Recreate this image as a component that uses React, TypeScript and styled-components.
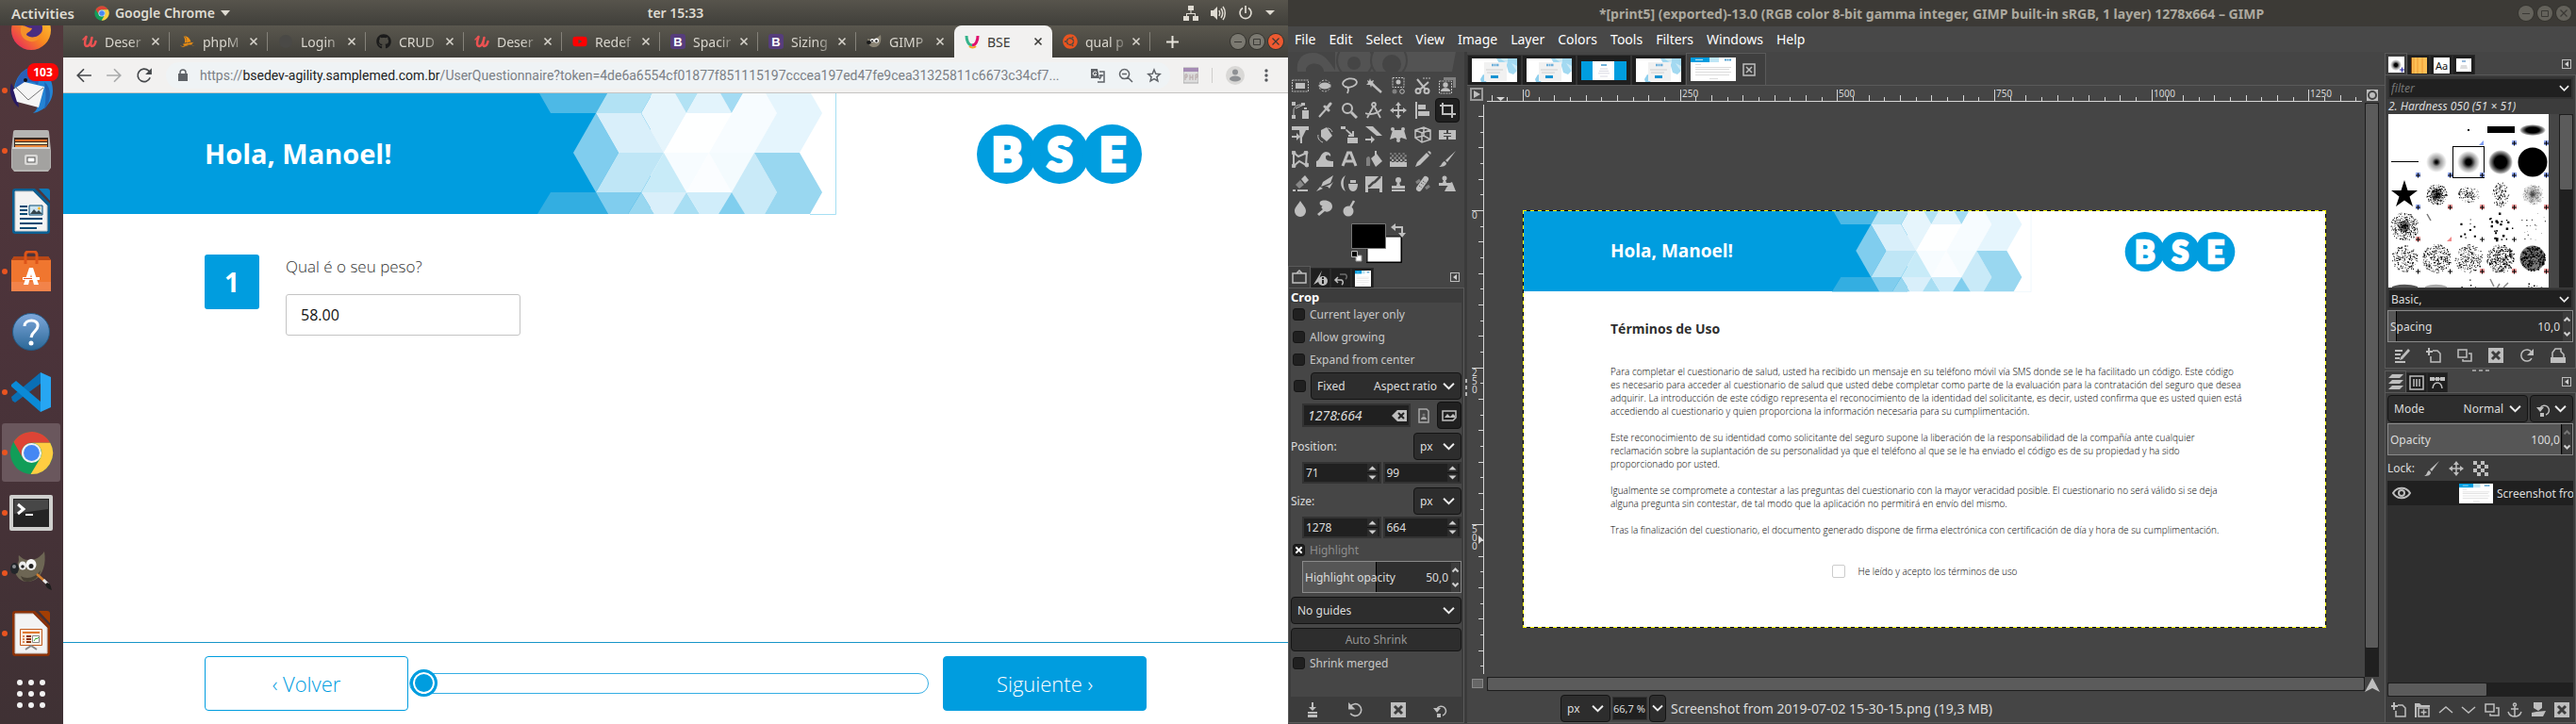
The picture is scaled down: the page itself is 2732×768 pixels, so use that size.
import React, { ReactNode } from 'react';
import styled, { createGlobalStyle, css } from 'styled-components';
import { FaGithub, FaYoutube, FaUbuntu } from 'react-icons/fa';
import { SiPhpmyadmin } from 'react-icons/si';

const UI = '"Noto Sans", "Open Sans", sans-serif';
const WEB = '"Open Sans", "Noto Sans", sans-serif';
const BLUE = '#009ddf';
const INK = '#bebebe';

const Global = createGlobalStyle`
  *, *::before, *::after { box-sizing: border-box; }
  html, body { margin: 0; background: #454545; }
  body { font-family: ${UI}; font-size: 12px; overflow: hidden; }
  button, input, select { font: inherit; color: inherit; margin: 0; padding: 0; border: 0; background: none; }
  svg { display: block; flex: none; }
  p, h1, h2 { margin: 0; }
`;

const Screen = styled.div`
  display: grid;
  grid-template-columns: minmax(0, 1fr) minmax(0, 1fr);
  height: 100vh;
`;

/* ------------------------------------------------------------ desktop */

const Desktop = styled.section`
  display: flex;
  flex-direction: column;
  min-width: 0;
  min-height: 0;
`;

const TopBar = styled.header`
  display: grid;
  grid-template-columns: 67px 1fr auto 1fr;
  align-items: center;
  height: 27px;
  flex: none;
  background: linear-gradient(#57544c, #403f3a);
  color: #dfdbd2;
  font-size: 14px;
  font-weight: 600;
`;

const TopLeft = styled.div`
  grid-column: 1 / 3;
  display: flex;
  align-items: center;
  gap: 6px;
  padding-left: 12px;
`;

const Activities = styled.button`
  margin-right: 15px;
  font-size: 15px;
  font-weight: 600;
`;

const TopRight = styled.div`
  display: flex;
  justify-content: flex-end;
  align-items: center;
  gap: 13px;
  padding-right: 14px;
`;

const DesktopBody = styled.div`
  display: flex;
  flex: 1;
  min-height: 0;
`;

const Launcher = styled.nav`
  display: flex;
  flex-direction: column;
  justify-content: flex-end;
  width: 67px;
  flex: none;
  overflow: hidden;
  background: linear-gradient(#52383c, #4b333a 45%, #3f3134);
`;

const LaunchItem = styled.button<{ $running?: boolean; $active?: boolean }>`
  position: relative;
  display: flex;
  align-items: center;
  justify-content: center;
  width: 62px;
  height: 62px;
  margin: 1px 3px 1px 2px;
  flex: none;
  border-radius: 3px;
  background: ${p => (p.$active ? '#6a575d' : 'transparent')};
  ${p =>
    p.$running &&
    css`
      &::before {
        content: '';
        position: absolute;
        left: 0;
        top: 28px;
        width: 6px;
        height: 6px;
        border-radius: 50%;
        background: #e95420;
      }
    `}
`;

const Badge = styled.span`
  position: absolute;
  left: 27px;
  top: 2px;
  width: 33px;
  height: 19px;
  border-radius: 8px;
  background: #fb0707;
  color: #fff;
  font-size: 12px;
  font-weight: 700;
  line-height: 19px;
  text-align: center;
`;

/* ------------------------------------------------------------ browser */

const Browser = styled.main`
  display: flex;
  flex-direction: column;
  flex: 1;
  min-width: 0;
  background: #fff;
`;

const TabStrip = styled.div`
  display: flex;
  align-items: stretch;
  height: 34px;
  flex: none;
  padding-left: 9px;
  background: linear-gradient(#5a574e, #403f3a);
  color: #d8d5cd;
`;

const Tab = styled.div<{ $active?: boolean; $line?: boolean }>`
  display: flex;
  align-items: center;
  flex: 0 1 104px;
  min-width: 0;
  padding: 0 10px 0 11px;
  background: ${p => (p.$active ? '#f2f1f0' : 'transparent')};
  color: ${p => (p.$active ? '#3c3b37' : 'inherit')};
  border-radius: 8px 8px 0 0;
  ${p =>
    p.$line &&
    css`
      background: linear-gradient(#85827a, #85827a) right 7px / 1px 20px no-repeat;
    `}
`;

const TabName = styled.a<{ $active?: boolean }>`
  flex: 1;
  min-width: 0;
  margin-left: 8px;
  overflow: hidden;
  white-space: nowrap;
  color: inherit;
  text-decoration: none;
  font-size: 14px;
  ${p => !p.$active && css`mask-image: linear-gradient(90deg, #000 60%, transparent 105%);`}
`;

const TabClose = styled.button`
  width: 10px;
  margin-left: 4px;
`;

const NewTab = styled.button`
  display: flex;
  align-items: center;
  padding: 0 17px;
`;

const WinButtons = styled.div`
  display: flex;
  align-items: center;
  gap: 4px;
  margin-left: auto;
  padding-right: 5px;
`;

const WinButton = styled.button<{ $close?: boolean; $dim?: boolean }>`
  display: flex;
  align-items: center;
  justify-content: center;
  width: 16px;
  height: 16px;
  border-radius: 50%;
  background: ${p => (p.$close ? '#ee5a31' : p.$dim ? '#64625b' : '#7b7971')};
  color: #3a3935;
  box-shadow: 0 0 0 1px #35342f;
`;

const NavBar = styled.div`
  display: flex;
  align-items: center;
  height: 38px;
  flex: none;
  padding: 0 14px 0 13px;
  gap: 14px;
  background: #f2f1f0;
  border-bottom: 1px solid #c5c4c2;
  color: #5a5d61;
`;

const IconButton = styled.button`
  display: flex;
  align-items: center;
  justify-content: center;
  min-width: 18px;
`;

const UrlBox = styled.div`
  display: flex;
  align-items: center;
  flex: 1;
  min-width: 0;
  height: 28px;
  padding: 0 8px 0 12px;
  gap: 12px;
  border-radius: 14px;
  background: #eff3f5;
`;

const Url = styled.div`
  flex: 1;
  min-width: 0;
  overflow: hidden;
  text-overflow: ellipsis;
  white-space: nowrap;
  font-family: Roboto, "Noto Sans", sans-serif;
  font-size: 14px;
  color: #7b8085;
  b { font-weight: 400; color: #222; }
`;

const Divider = styled.span`
  width: 1px;
  height: 16px;
  background: #cfcecc;
`;

/* --------------------------------------------- questionnaire web page */

const Hero = styled.div<{ $small?: boolean }>`
  display: flex;
  flex: none;
  height: ${p => (p.$small ? 85 : 129)}px;
`;

const Banner = styled.div`
  display: flex;
  flex: 1;
  min-width: 0;
`;

const Greeting = styled.h1<{ $small?: boolean }>`
  flex: 1;
  min-width: 0;
  background: ${BLUE};
  color: #fff;
  font-family: ${WEB};
  white-space: nowrap;
  font-size: ${p => (p.$small ? 19 : 29)}px;
  line-height: ${p => (p.$small ? 84 : 128)}px;
  height: ${p => (p.$small ? 85 : 128)}px;
  padding-left: ${p => (p.$small ? 92 : 150)}px;
`;

const LogoCell = styled.div<{ $small?: boolean }>`
  display: flex;
  align-items: center;
  justify-content: flex-end;
  flex: 0 0 ${p => (p.$small ? '36.6%' : '36.8%')};
  padding-right: ${p => (p.$small ? 95 : 155)}px;
`;

const Question = styled.section`
  display: flex;
  flex: 1;
  gap: 28px;
  padding: 42px 150px 0;
  font-family: ${WEB};
`;

const QuestionNumber = styled.div`
  width: 58px;
  height: 58px;
  border-radius: 3px;
  background: ${BLUE};
  color: #fff;
  font-size: 28px;
  font-weight: 700;
  line-height: 58px;
  text-align: center;
`;

const Field = styled.div`
  display: flex;
  flex-direction: column;
  width: 249px;
  label {
    height: 42px;
    line-height: 26px;
    font-size: 17px;
    font-weight: 300;
    color: #333;
  }
  input {
    height: 44px;
    padding: 0 15px;
    border: 1px solid #c4c4c4;
    border-radius: 3px;
    font-size: 16px;
    color: #111;
  }
`;

const Footer = styled.footer`
  display: flex;
  align-items: center;
  height: 87px;
  flex: none;
  padding: 0 150px;
  border-top: 1px solid #1795c8;
  font-family: ${WEB};
`;

const StepButton = styled.button<{ $primary?: boolean }>`
  width: 216px;
  height: 58px;
  flex: none;
  border: 1px solid ${BLUE};
  border-radius: 4px;
  background: ${p => (p.$primary ? BLUE : '#fff')};
  color: ${p => (p.$primary ? '#fff' : BLUE)};
  font-size: 22px;
  font-weight: 300;
`;

const Progress = styled.input`
  appearance: none;
  flex: 1;
  min-width: 0;
  height: 30px;
  margin: 0 15px 0 1px;
  &::-webkit-slider-runnable-track {
    height: 22px;
    border: 1px solid #35aee4;
    border-radius: 11px;
  }
  &::-webkit-slider-thumb {
    appearance: none;
    width: 29px;
    height: 29px;
    margin-top: -5px;
    border: 3px solid ${BLUE};
    border-radius: 50%;
    background: ${BLUE};
    box-shadow: inset 0 0 0 2px #fff;
  }
`;

/* --------------------------------------------------------------- gimp */

const Gimp = styled.section`
  display: flex;
  flex-direction: column;
  min-width: 0;
  min-height: 0;
  background: #454545;
  color: #dcdcdc;
`;

const TitleBar = styled.header`
  display: flex;
  align-items: center;
  height: 28px;
  flex: none;
  background: #3c3a36;
  color: #aca99f;
  font-size: 14px;
  font-weight: 700;
  span { flex: 1; padding-left: 60px; text-align: center; white-space: nowrap; }
`;

const MenuBar = styled.nav`
  display: flex;
  align-items: center;
  gap: 14px;
  height: 27px;
  flex: none;
  padding-left: 7px;
  background: #484848;
  color: #fff;
  font-size: 14px;
`;

const GimpBody = styled.div`
  display: flex;
  flex: 1;
  min-height: 0;
  padding-bottom: 1px;
`;

const Dock = styled.aside<{ $w: number }>`
  display: flex;
  flex-direction: column;
  width: ${p => p.$w}px;
  flex: none;
  min-height: 0;
`;

const Sash = styled.div`
  width: 3px;
  flex: none;
  background: linear-gradient(#b5b5b5 0 4px, transparent 4px 7px, #b5b5b5 7px 11px, transparent 11px 14px, #b5b5b5 14px 18px) 1px 50% / 2px 18px no-repeat #3b3b3b;
`;

const ToolGrid = styled.div`
  display: grid;
  grid-template-columns: repeat(7, 26px);
  grid-auto-rows: 26px;
  margin-top: 2px;
`;

const Tool = styled.button<{ $on?: boolean }>`
  display: flex;
  align-items: center;
  justify-content: center;
  border-radius: 4px;
  ${p => p.$on && css`background: #202020; border: 1px solid #111;`}
`;

const DockTabs = styled.div<{ $h: number }>`
  display: flex;
  align-items: flex-end;
  height: ${p => p.$h}px;
  flex: none;
  padding-right: 5px;
`;

const DockTab = styled.button<{ $on?: boolean; $w: number }>`
  display: flex;
  align-items: center;
  justify-content: center;
  width: ${p => p.$w}px;
  height: ${p => (p.$on ? 23 : 21)}px;
  background: ${p => (p.$on ? '#3c3c3c' : '#1f1f1f')};
  border: 1px solid ${p => (p.$on ? '#5a5a5a' : '#2a2a2a')};
  border-bottom: 0;
`;

const TabMenu = styled.button`
  display: flex;
  align-items: center;
  justify-content: center;
  width: 10px;
  height: 10px;
  margin: 0 0 6px auto;
  border: 1px solid #bdbdbd;
`;

const Frame = styled.div<{ $grow?: boolean }>`
  display: flex;
  flex-direction: column;
  min-height: 0;
  flex: ${p => (p.$grow ? 1 : 'none')};
  padding: 0 2px;
  background: #3c3c3c;
  border: 1px solid #5a5a5a;
`;

const Options = styled.div`
  display: flex;
  flex-direction: column;
  flex: 1;
  min-height: 0;
  background: #464646;
`;

const OptionsTitle = styled.h2`
  height: 15px;
  flex: none;
  background: #3c3c3c;
  color: #fff;
  font-size: 13px;
  line-height: 18px;
`;

const Row = styled.div<{ $h?: number; $mt?: number; $pl?: number; $gap?: number }>`
  display: flex;
  align-items: center;
  flex: none;
  height: ${p => p.$h ?? 24}px;
  margin-top: ${p => p.$mt ?? 0}px;
  padding-left: ${p => p.$pl ?? 0}px;
  gap: ${p => p.$gap ?? 0}px;
`;

const Grow = styled.span`
  flex: 1;
`;

const CheckLabel = styled.label<{ $dim?: boolean }>`
  display: flex;
  align-items: center;
  gap: 5px;
  height: 24px;
  flex: none;
  padding-left: 2px;
  color: ${p => (p.$dim ? '#8d8d8d' : '#c8c8c8')};
`;

const Check = styled.input`
  appearance: none;
  width: 13px;
  height: 13px;
  flex: none;
  border: 1px solid #151515;
  border-radius: 3px;
  background: #202020;
  &:checked {
    background:
      linear-gradient(45deg, transparent 40%, #fff 40% 60%, transparent 60%) center / 7px 7px no-repeat,
      linear-gradient(-45deg, transparent 40%, #fff 40% 60%, transparent 60%) center / 7px 7px no-repeat,
      #202020;
  }
`;

const Combo = styled.label<{ $w?: number; $tight?: boolean }>`
  display: flex;
  align-items: center;
  height: 29px;
  padding: 0 ${p => (p.$tight ? 2 : 6)}px;
  ${p => (p.$w ? css`width: ${p.$w}px; flex: none;` : css`flex: 1; min-width: 0;`)}
  border: 1px solid #141414;
  border-radius: 4px;
  background: #2d2d2d;
  select {
    appearance: none;
    flex: 1;
    min-width: 0;
    outline: 0;
  }
`;

const RightSelect = styled.select`
  text-align-last: right;
  padding-right: 6px;
`;

const Entry = styled.label<{ $w?: number; $h: number; $italic?: boolean; $tight?: boolean }>`
  display: flex;
  align-items: center;
  height: ${p => p.$h}px;
  ${p => (p.$w ? css`width: ${p.$w}px; flex: none;` : css`flex: 1; min-width: 0;`)}
  padding: 0 ${p => (p.$tight ? 0 : 2)}px;
  border: ${p => (p.$tight ? 1 : 2)}px solid #333;
  background: #202020;
  input {
    flex: 1;
    min-width: 0;
    width: 100%;
    outline: 0;
    ${p => p.$italic && css`font-size: 14px; font-style: italic; padding-left: 2px;`}
    ${p => p.$tight && css`font-size: 11px;`}
  }
  input::placeholder { color: #757575; font-style: italic; }
`;

const ScaleBox = styled.label<{ $fill: string }>`
  display: flex;
  align-items: center;
  width: 100%;
  height: 34px;
  flex: none;
  padding: 0 1px 0 2px;
  border: 1px solid #8a8a8a;
  background: linear-gradient(90deg, #565656 ${p => p.$fill}, #000 ${p => p.$fill}, #000 calc(${p => p.$fill} + 1px), #2f2f2f calc(${p => p.$fill} + 1px));
  span { white-space: nowrap; }
  input { flex: 1; min-width: 0; width: 20px; padding-right: 3px; text-align: right; outline: 0; }
`;

const PushButton = styled.button`
  height: 25px;
  flex: none;
  margin-top: 4px;
  border: 1px solid #141414;
  border-radius: 4px;
  background: #2d2d2d;
  color: #969696;
`;

const Pressed = styled.button<{ $on?: boolean }>`
  display: flex;
  align-items: center;
  justify-content: center;
  width: 26px;
  height: 29px;
  ${p => p.$on && css`background: #202020; border: 1px solid #111; border-radius: 4px;`}
`;

const ActionBar = styled.div`
  display: flex;
  align-items: center;
  justify-content: space-around;
  height: 27px;
  flex: none;
`;

const Workspace = styled.main`
  display: flex;
  flex-direction: column;
  flex: 1;
  min-width: 0;
`;

const ImageTabs = styled.div`
  display: flex;
  align-items: flex-end;
  height: 36px;
  flex: none;
  border-bottom: 1px solid #5a5a5a;
`;

const ImageTab = styled.button<{ $on?: boolean }>`
  display: flex;
  align-items: center;
  gap: 7px;
  flex: none;
  width: ${p => (p.$on ? 85 : 58)}px;
  height: ${p => (p.$on ? 34 : 32)}px;
  padding: 0 4px;
  background: ${p => (p.$on ? '#3f3f3f' : '#1f1f1f')};
  border: 1px solid ${p => (p.$on ? '#5a5a5a' : '#333')};
  border-bottom: 0;
`;

const RulerRow = styled.div`
  display: flex;
  height: 18px;
  flex: none;
  overflow: hidden;
`;

const RulerClip = styled.div`
  flex: 1;
  min-width: 0;
  overflow: hidden;
`;

const CanvasRow = styled.div`
  display: flex;
  flex: 1;
  min-height: 0;
  gap: 1px;
  padding-right: 6px;
`;

const SideRuler = styled.div`
  width: 18px;
  flex: none;
  overflow: hidden;
`;

const Viewport = styled.div`
  display: flex;
  justify-content: center;
  align-items: flex-start;
  flex: 1;
  min-width: 0;
  overflow: hidden;
  padding-top: 114px;
`;

const Marquee = styled.div`
  width: 852px;
  flex: none;
  padding: 1px;
  background:
    repeating-linear-gradient(90deg, #ff0 0 4px, #000 4px 8px) top / 100% 1px no-repeat,
    repeating-linear-gradient(90deg, #ff0 0 4px, #000 4px 8px) bottom / 100% 1px no-repeat,
    repeating-linear-gradient(#ff0 0 4px, #000 4px 8px) left / 1px 100% no-repeat,
    repeating-linear-gradient(#ff0 0 4px, #000 4px 8px) right / 1px 100% no-repeat;
`;

const Sheet = styled.article`
  display: flex;
  flex-direction: column;
  height: 441px;
  background: #fff;
  color: #000;
  font-family: ${WEB};
`;

const Terms = styled.div`
  display: flex;
  flex-direction: column;
  padding: 30px 92px 0;
  font-size: 10px;
  font-weight: 300;
  line-height: 14px;
  h2 { margin-bottom: 28px; color: #2f2f2f; font-size: 14px; line-height: 20px; }
  p { margin-bottom: 14px; white-space: nowrap; }
`;

const Accept = styled.label`
  display: flex;
  align-items: center;
  align-self: center;
  gap: 14px;
  margin-top: 16px;
  input {
    appearance: none;
    width: 14px;
    height: 14px;
    border: 1px solid #ccc;
    border-radius: 2px;
  }
`;

const VTrack = styled.div<{ $thumb: string }>`
  width: 15px;
  flex: none;
  background: #202020;
  &::before {
    content: '';
    display: block;
    height: ${p => p.$thumb};
    border: 1px solid #1d1d1d;
    border-radius: 2px;
    background: #5b5b5b;
  }
`;

const HTrack = styled.div<{ $thumb: string; $grow?: boolean }>`
  height: 15px;
  flex: ${p => (p.$grow ? 1 : 'none')};
  background: #202020;
  &::before {
    content: '';
    display: block;
    width: ${p => p.$thumb};
    height: 15px;
    border: 1px solid #1d1d1d;
    border-radius: 2px;
    background: #5b5b5b;
  }
`;

const ScrollRow = styled.div`
  display: flex;
  align-items: flex-start;
  height: 18px;
  flex: none;
  padding: 0 1px 0 5px;
  svg:first-child { margin-right: 4px; }
`;

const StatusBar = styled.footer`
  display: flex;
  align-items: center;
  height: 31px;
  flex: none;
  padding-left: 99px;
  gap: 2px;
  border-bottom: 1px solid #5a5a5a;
  span { padding-left: 3px; font-size: 14px; }
`;

const BrushCaption = styled.p`
  height: 16px;
  flex: none;
  padding-left: 1px;
  font-style: italic;
  line-height: 15px;
`;

const BrushArea = styled.div`
  display: flex;
  justify-content: space-between;
  height: 184px;
  flex: none;
  background: #464646;
`;

const BrushGrid = styled.div`
  display: grid;
  grid-template-columns: repeat(5, 34px);
  grid-auto-rows: 34px;
  overflow: hidden;
  margin-left: 1px;
  background: #fff;
`;

const BrushCell = styled.button<{ $on?: boolean }>`
  width: 34px;
  height: 34px;
  box-shadow: ${p => (p.$on ? 'inset 0 0 0 1px #000' : 'none')};
`;

const Grip = styled.div`
  height: 5px;
  flex: none;
  margin: 0 auto;
  width: 18px;
  background: repeating-linear-gradient(90deg, #9a9a9a 0 4px, transparent 4px 7px) 0 1px / 18px 2px no-repeat;
`;

const LayerList = styled.div`
  flex: 1;
  min-height: 0;
  background: #2f2f2f;
`;

const LayerRow = styled.div`
  display: flex;
  align-items: center;
  height: 26px;
  padding-left: 5px;
  overflow: hidden;
  background: #202020;
  white-space: nowrap;
  span { padding-left: 4px; }
`;

const LayerThumb = styled.div`
  margin-left: 51px;
`;

/* -------------------------------------------------------------- icons */

const Chevron = ({ size = 13 }: { size?: number }) => (
  <svg width={size} height={size} viewBox="0 0 12 12" fill="none" stroke="#ededed" strokeWidth="1.8">
    <path d="M1 3.5l5 5 5-5" />
  </svg>
);

const Cross = ({ w = 1.6 }: { w?: number }) => (
  <svg width="10" height="10" viewBox="0 0 10 10" stroke="currentColor" strokeWidth={w}>
    <path d="M1.500 1.500l7 7M8.500 1.500l-7 7" />
  </svg>
);

const SpinArrows = () => (
  <svg width="11" height="19" viewBox="0 0 11 19">
    <path d="M0 0h11v19H0z" fill="#2b2b2b" />
    <path d="M0 9h11v1H0z" fill="#111" />
    <path d="M1.500 6.500l4-4 4 4zM1.500 12.500l4 4 4-4z" fill="#cfcfcf" />
  </svg>
);

const ScaleArrows = ({ top = '#cfcfcf' }: { top?: string }) => (
  <svg width="9" height="31" viewBox="0 0 9 31" fill="none" strokeWidth="2">
    <path d="M0 0h9v31H0z" fill="#3c3c3c" />
    <path d="M1.500 9.500l3-3 3 3" stroke={top} />
    <path d="M1.500 21.500l3 3 3-3" stroke="#cfcfcf" />
  </svg>
);

const LeftTriangle = () => (
  <svg width="6" height="6" viewBox="0 0 6 6"><path d="M5 0v6L1 3z" fill="#d0d0d0" /></svg>
);

const ChromeLogo = ({ size }: { size: number }) => (
  <svg width={size} height={size} viewBox="0 0 48 48">
    <circle cx="24" cy="24" r="23" fill="#119d58" />
    <path d="M24 13h20.200A23 23 0 0 0 4.500 12L14.500 29.500A11 11 0 0 1 24 13z" fill="#dd4436" />
    <path d="M44.200 13H24a11 11 0 0 1 9.500 16.500L23 47A23 23 0 0 0 44.200 13z" fill="#ffcd41" />
    <circle cx="24" cy="24" r="10.800" fill="#f1f1f1" />
    <circle cx="24" cy="24" r="8.600" fill="#4587f3" />
  </svg>
);

const Wilber = ({ size }: { size: number }) => (
  <svg width={size} height={size} viewBox="0 0 46 46">
    <path d="M9 12c2-3 0-6 1-8 3 3 6 5 10 5 7 0 12-2 17-9 1 6 1 12-1 18-3 9-9 14-17 14-7 0-12-5-13-11z" fill="#6d6654" />
    <path d="M12 26c6 4 16 2 21-6-1 7-8 12-14 12-4 0-6-3-7-6z" fill="#453f33" />
    <ellipse cx="14" cy="15" rx="4" ry="4.500" fill="#eee" /><ellipse cx="23" cy="14" rx="5.500" ry="6" fill="#f6f6f6" />
    <circle cx="14" cy="16" r="1.800" fill="#222" /><circle cx="23" cy="15.500" r="2.500" fill="#222" />
    <ellipse cx="5.500" cy="18" rx="4.500" ry="6" fill="#23262a" /><ellipse cx="5" cy="16" rx="2" ry="2" fill="#8b8f93" />
    <path d="M29 24l9 8" stroke="#d6802e" strokeWidth="2.500" /><path d="M36 30l5 5" stroke="#e8e8e8" strokeWidth="3" />
    <path d="M40 33c4 1 4 5 5 8-4-1-6-3-7-6z" fill="#1d1d1d" />
  </svg>
);

const WilberFace = () => (
  <svg width="16" height="16" viewBox="0 0 16 16">
    <path d="M1 5l3 1c2 0 4-1 6-1l5-4c1 5 0 13-7 13-3 0-6-2-6-5z" fill="#8a8474" />
    <circle cx="6" cy="7" r="2" fill="#fff" /><circle cx="10.500" cy="7" r="2.500" fill="#fff" />
    <circle cx="6" cy="7.500" r="1" fill="#111" /><circle cx="10.500" cy="7.500" r="1.200" fill="#111" />
    <ellipse cx="2.500" cy="9" rx="2.500" ry="2" fill="#191919" />
  </svg>
);

const OfficeDoc = ({ main, corner, kind }: { main: string; corner: string; kind: 'writer' | 'impress' }) => (
  <svg width="40" height="48" viewBox="0 0 40 48">
    <path d="M3 0h21l16 16v29a3 3 0 0 1-3 3H3a3 3 0 0 1-3-3V3a3 3 0 0 1 3-3z" fill={main} />
    <path d="M3 3h19l15 15v27H3z" fill="#f3f3f3" /><path d="M3 3h19l15 15v27H3z" fill="none" stroke="#c7c7c7" />
    <path d="M28 0h9a3 3 0 0 1 3 3v10z" fill={corner} />
    {kind === 'writer' ? (
      <g>
        <path d="M8 18h8v2H8zm0 4h8v2H8zm0 4h8v2H8zm0 5h24v2H8zm0 5h24v2H8zm0 5h18v2H8z" fill="#074a73" />
        <path d="M18 18h14v10H18z" fill="#cfe6f2" stroke="#074a73" /><path d="M19 27l4-5 3 3 2-2 4 4z" fill="#35464e" />
        <circle cx="28.500" cy="21" r="1.500" fill="#f5b82e" />
      </g>
    ) : (
      <g>
        <path d="M8.500 19.500h23v17h-23z" fill="#fbeee0" stroke="#c25a1c" />
        <path d="M11 22h18v2H11z" fill="#e07a2f" />
        <path d="M15 26h5v2h-5zm0 3h5v2h-5zm0 3h5v2h-5z" fill="#8b3208" /><path d="M11 26h2v2h-2zm0 3h2v2h-2zm0 3h2v2h-2z" fill="#dd8a55" />
        <path d="M21.500 26.500h7v7h-7z" fill="#fff" stroke="#888" /><path d="M23 32l2-3 1 1 2-2" stroke="#3faf2f" fill="none" />
        <path d="M14 41l6-4 6 4" stroke="#888" strokeWidth="2" fill="none" />
      </g>
    )}
  </svg>
);

const Firefox = () => (
  <svg width="44" height="44" viewBox="0 0 44 44">
    <defs>
      <linearGradient id="ff" x1="1" y1="0" x2="0" y2="1">
        <stop offset="0" stopColor="#ffd23c" /><stop offset=".5" stopColor="#f98a1e" /><stop offset="1" stopColor="#e3136b" />
      </linearGradient>
    </defs>
    <circle cx="22" cy="22" r="21" fill="url(#ff)" />
    <circle cx="23" cy="20" r="11" fill="#4a2c80" />
    <path d="M12 17c5 0 6 3 11 3-1 4-6 4-6 7 4 4 13 3 16-3-1 9-9 12-15 9-6-2-9-10-6-16z" fill="#f5902a" />
  </svg>
);

const Thunderbird = () => (
  <svg width="48" height="50" viewBox="0 0 48 50">
    <path d="M22 1c14-2 25 9 25 24 0 12-9 22-21 24 4-3 5-6 5-9L6 22C8 12 13 4 22 1z" fill="#2383d4" />
    <path d="M22 1c8 2 12 10 9 18-6-6-14-4-24 6C7 14 13 4 22 1z" fill="#2a5fb8" />
    <path d="M3 17c-3 8 0 20 8 26l-2-14z" fill="#281a63" />
    <path d="M5 24l12-8 21 5-6 22L9 37z" fill="#f5f5f5" /><path d="M7 21l14 14 16-13" fill="none" stroke="#777" />
    <path d="M38 16c8 6 8 20 0 29 2-10 2-20 0-29z" fill="#1f63b4" /><circle cx="18" cy="14" r="2" fill="#111" />
  </svg>
);

const Files = () => (
  <svg width="42" height="44" viewBox="0 0 42 44">
    <path d="M2 2a2 2 0 0 1 2-2h34a2 2 0 0 1 2 2l2 20v18l-3 4H3l-3-4V22z" fill="#b5b4b2" />
    <path d="M3 8h36v12H3z" fill="#3a2a20" /><path d="M4 10h34v2H4z" fill="#e06b25" /><path d="M4 13h34v2H4z" fill="#fbe3b8" /><path d="M4 16h34v3H4z" fill="#ef8a3a" />
    <path d="M1 18h40v24H1z" fill="#a3a2a0" /><path d="M1 18h40v2H1z" fill="#d4d3d1" />
    <rect x="14" y="26" width="14" height="11" rx="2" fill="#d9d8d6" /><rect x="17" y="29" width="8" height="5" fill="#fff" stroke="#555" />
  </svg>
);

const Software = () => (
  <svg width="42" height="44" viewBox="0 0 42 44">
    <path d="M3 6h36l3 4v33H0V10z" fill="#f0762f" /><path d="M3 6h36l3 4H0z" fill="#b84716" />
    <path d="M15 14V4a3 3 0 0 1 3-3h6a3 3 0 0 1 3 3v10" stroke="#dd5419" strokeWidth="3" fill="none" />
    <path d="M0 33h42v10H0z" fill="#f2834a" />
    <path d="M13 36l6-18h4l6 18h-5l-3-11-3 11z" fill="#fff" /><path d="M12 28h18v3H12z" fill="#fff" /><path d="M13 29h9v1h-9z" fill="#e95420" />
  </svg>
);

const Help = () => (
  <svg width="40" height="40" viewBox="0 0 40 40">
    <defs><linearGradient id="hp" x2="0" y2="1"><stop stopColor="#7fa8dc" /><stop offset="1" stopColor="#2a6796" /></linearGradient></defs>
    <circle cx="20" cy="20" r="19.500" fill="url(#hp)" stroke="#235a86" />
    <path d="M13 14c0-8 15-8 14 0 0 5-6 5-7 12" stroke="#fff" strokeWidth="3" fill="none" /><circle cx="20" cy="32" r="2.500" fill="#fff" />
  </svg>
);

const VsCode = () => (
  <svg width="42" height="42" viewBox="0 0 42 42">
    <path d="M31 0L0 26l1 4 3 2 27-20z" fill="#0a6fb5" /><path d="M0 13l5-4 26 22v11L0 15z" fill="#0b8ad6" />
    <path d="M31 0l11 5v32l-11 5z" fill="#27a6f2" />
  </svg>
);

const Terminal = () => (
  <svg width="46" height="38" viewBox="0 0 46 38">
    <rect width="46" height="38" rx="2" fill="#cfcfcd" /><rect x="4" y="4" width="38" height="30" fill="#242424" />
    <path d="M5 5h36v10L5 20z" fill="#474747" /><path d="M9 10l6 5-6 5" stroke="#fff" strokeWidth="3" fill="none" /><path d="M17 21h8" stroke="#fff" strokeWidth="2" />
  </svg>
);

const AppsGrid = () => (
  <svg width="30" height="30" viewBox="0 0 30 30" fill="#f2f2f2">
    {[3, 15, 27].map(y => [3, 15, 27].map(x => <circle key={`${x}-${y}`} cx={x} cy={y} r="3" />))}
  </svg>
);

const Udemy = () => (
  <svg width="16" height="16" viewBox="0 0 16 16" fill="none" stroke="#ec5252" strokeLinecap="round" strokeLinejoin="round">
    <path d="M4.500 3C3 7 2 13 5 13c2.500 0 4.500-4 5.500-9-1 4-2 9 0 9 2 0 3.500-3 4-5" strokeWidth="2.500" />
    <path d="M1 6l3-3" strokeWidth="1.500" />
  </svg>
);

const Bootstrap = () => (
  <svg width="16" height="16" viewBox="0 0 16 16">
    <rect width="16" height="16" rx="3" fill="#563d7c" />
    <text x="8" y="13" fontSize="13" fontWeight="700" fill="#fff" textAnchor="middle" fontFamily="Liberation Sans, sans-serif">B</text>
  </svg>
);

const BseIcon = () => (
  <svg width="16" height="16" viewBox="0 0 16 16" fill="none" strokeWidth="3">
    <path d="M2 2c0 5 2 10 6 10" stroke="#35b38a" /><path d="M14 2c0 5-2 10-6 10" stroke="#e0116e" /><path d="M5 13c2 2 5 2 7 0" stroke="#f5a623" strokeWidth="2" />
  </svg>
);

/* Artwork of the page header: triangles on a lattice of side 48. */
const FACETS: [string, string][] = [
  ['2,0 74,0 62,21 14,21', '#4db9e6'],
  ['74,0 122,0 110,21 62,21', '#b2e2f4'],
  ['122,0 146,0 158,21 134,63 110,21', '#e6f5fc'],
  ['146,0 170,0 158,21', '#b2e2f4'],
  ['170,0 194,0 206,21 158,21', '#e3f4fc'],
  ['194,0 218,0 206,21', '#a3dbf3'],
  ['218,0 242,0 254,21 230,63 182,63 206,21', '#f7fcff'],
  ['242,0 290,0 302,21 278,63 230,63 254,21', '#e5f5fd'],
  ['62,21 86,63 62,105 38,63', '#80cdee'],
  ['62,21 110,21 134,63 86,63', '#d9effa'],
  ['86,63 134,63 110,105 62,105', '#bfe6f6'],
  ['158,21 206,21 182,63 134,63', '#feffff'],
  ['134,63 182,63 158,105', '#f7fcff'],
  ['182,63 206,105 158,105', '#fbfdff'],
  ['182,63 230,63 206,105', '#f4fbfe'],
  ['134,63 158,105 110,105', '#c8ebf8'],
  ['230,63 254,105 241,128 219,128 206,105', '#c9eaf8'],
  ['230,63 278,63 302,105 289,128 241,128 254,105', '#99d7f0'],
  ['14,105 62,105 75,128 0,128', '#33aee1'],
  ['62,105 110,105 96,128 75,128', '#80cdee'],
  ['110,105 124,128 96,128', '#99d7f0'],
  ['110,105 158,105 144,128 124,128', '#d9effa'],
  ['158,105 172,128 144,128', '#a8def3'],
  ['158,105 206,105 192,128 172,128', '#d0edfa'],
  ['206,105 220,128 192,128', '#80ceee'],
];

const Facets = ({ small }: { small?: boolean }) => (
  <svg width={small ? 212 : 318} height={small ? 86 : 129} viewBox="0 0 318 129">
    <path d="M0 0h120v128H0z" fill={BLUE} />
    {FACETS.map(([points, fill], i) => <polygon key={i} points={points} fill={fill} />)}
    <path d="M316.500 0v128.500H289" fill="none" stroke={small ? '#e8f5fc' : '#a6dff3'} />
  </svg>
);

const BseLogo = ({ small }: { small?: boolean }) => (
  <svg width={small ? 118 : 175} height={small ? 42 : 63} viewBox="0 0 175 63">
    <g fill={BLUE}>
      <circle cx="31.500" cy="31.500" r="31.500" /><circle cx="87.500" cy="31.500" r="31.500" /><circle cx="143.500" cy="31.500" r="31.500" />
    </g>
    <g fill="#fff" stroke="#fff" strokeWidth="4" fontFamily="Lato, sans-serif" fontWeight="900" fontSize="48" textAnchor="middle">
      <text x="32" y="49">B</text><text x="88" y="49">S</text><text x="144" y="49">E</text>
    </g>
  </svg>
);

/* Toolbox drawings on an 18 pixel square. */
const TOOLS: ReactNode[] = [
  <g><path d="M.5 3h17v12H.5z" fill="none" strokeDasharray="2 1" /><path d="M4 6h10v6H4z" stroke="none" /></g>,
  <g><ellipse cx="9" cy="9" rx="6" ry="6" fill="none" strokeDasharray="2 1.500" /><ellipse cx="9" cy="9" rx="6" ry="3.500" stroke="none" /></g>,
  <g fill="none" strokeWidth="1.800"><ellipse cx="9.500" cy="6" rx="7.500" ry="4.500" transform="rotate(-10 9 6)" /><path d="M4 10c4 0 5 2 3 7" /></g>,
  <g><path d="M7 7l10 9" strokeWidth="2.500" /><path d="M5 1l1 3 3-1-1 3 2 2-3 0-1 3-1-3-4 0 2-2-1-3 2 1z" stroke="none" /></g>,
  <g><path d="M3 .5h12v10H3z" fill="none" strokeDasharray="2 1" /><circle cx="9" cy="5" r="2.500" stroke="none" /><circle cx="5" cy="15" r="2.500" stroke="none" opacity=".5" /><circle cx="13" cy="15" r="2.300" fill="none" /></g>,
  <g fill="none" strokeWidth="2"><path d="M3 2l9 11M15 5l-9 8" /><circle cx="4" cy="14.500" r="2.500" /><circle cx="13" cy="14.500" r="2.500" /><path d="M9 1h9" strokeWidth="1" strokeDasharray="2 1" /></g>,
  <g><path d="M5 0h13v11h-3V3H5z" stroke="none" opacity=".5" /><path d="M.5 4h13v13H.5z" fill="none" strokeDasharray="2 1" /><circle cx="7" cy="8" r="2.700" stroke="none" /><path d="M2 15c0-5 10-5 10 0z" stroke="none" /></g>,
  <g><path d="M2 16V9c0-4 4-6 9-6" fill="none" /><path d="M0 0h4v4H0zM0 14h4v4H0zM10 1h4v3h-4zM11 9h7v9h-7zM13 6h3v2h-3z" stroke="none" /><path d="M4 7l9-4" fill="none" /></g>,
  <g><path d="M3 16l8-9" strokeWidth="2" /><path d="M9 5l4 4M11 7l4-5" strokeWidth="3" strokeLinecap="round" /></g>,
  <g fill="none"><circle cx="7" cy="7" r="5" strokeWidth="2" /><path d="M11 11l6 6" strokeWidth="3" /></g>,
  <g fill="none" strokeWidth="1.800"><path d="M9 4L2 17M9 4l7 13M0 12c5 2 13 1 17-4" /><circle cx="9" cy="3" r="2" /></g>,
  <g strokeWidth="1.800"><path d="M9 2v14M2 9h14" /><path d="M9 0l3 4H6zM9 18l3-4H6zM0 9l4-3v6zM18 9l-4-3v6z" stroke="none" /></g>,
  <g stroke="none"><path d="M1 0h2v18H1zM4 3h8v5H4zM4 10h12v5H4z" /></g>,
  <g fill="none" strokeWidth="2"><path d="M4 1v12h10M1 4h13v13" /><path d="M15 13h3" /></g>,
  <g stroke="none"><path d="M0 0h18v4H0zM8 4h7l-4 8v6H9zM0 10h5V7l4 4-4 4v-3H0z" /></g>,
  <g><path d="M5 4l6-3 6 9-6 6-6-5z" stroke="none" /><path d="M2 9c-1 4 2 7 5 8M12 2c3 0 4 2 5 4" fill="none" /></g>,
  <g stroke="none"><path d="M0 0h5v3H0zM6 3l6 5V5h2v6H8V9h2L5 4zM7 12h11v6H7z" /></g>,
  <g stroke="none"><path d="M0 0h8l10 10h-6zM0 13h6v-3l4 4-4 4v-3H0z" /></g>,
  <g stroke="none"><path d="M3 4h12l3 10-6-2-3 3-3-3-6 2z" /><circle cx="3" cy="3" r="2" /><circle cx="14" cy="3" r="2" /><circle cx="9" cy="15" r="2" /></g>,
  <g fill="none" strokeWidth="1.500"><path d="M1 4l9-3 7 3v10l-9 3-7-5zM1 4l7 3 9-3M8 7v10M10 1v9l7 4M1 12l9-2" /></g>,
  <g stroke="none"><path d="M0 4h8v3H5v4h3v3H0zM10 4h8v10h-8v-3h3V7h-3z" /><path d="M1 9l4-3v2h8V6l4 3-4 3v-2H5v2z" /></g>,
  <g><path d="M2 2l5 4 9-4-1 13-7-4-6 5z" fill="none" strokeWidth="2" /><circle cx="2" cy="2" r="2" /><circle cx="15" cy="2" r="2" /><circle cx="16" cy="15" r="2" /><circle cx="2" cy="16" r="2" /></g>,
  <g stroke="none"><path d="M0 17v-6c4 0 4-9 10-10 4 0 6 3 5 5-2-2-5-2-5 1s3 4 8 4v6z" /></g>,
  <path d="M2 16L7.500 2h3L16 16M5 11h8" fill="none" strokeWidth="3" />,
  <g stroke="none"><path d="M6 8l6-5 6 8-7 6zM10 0h2v8h-2z" /><path d="M1 8c3-4 5-2 4 8H1z" opacity=".5" /></g>,
  <g stroke="none"><path d="M0 12h18v5H0z" />{[0, 1, 2, 3, 4].map(r => [0, 1, 2, 3].map(c => <path key={`${r}${c}`} opacity={0.4 + r * 0.15} d={`M${c * 4.5 + (r % 2) * 2} ${2 + r * 2.3}h2.2v2h-2.2z`} />))}</g>,
  <g stroke="none"><path d="M1 17l2-5L13 2l3 3L6 15zM14 1c2-2 5 1 3 3z" /></g>,
  <g stroke="none"><path d="M18 0L9 12 7 10zM6 11l2 2c0 3-4 4-8 4 3-1 3-5 6-6z" /></g>,
  <g stroke="none"><path d="M10 4l4-4 4 5-4 4z" /><path d="M4 10l5-5 4 5-5 4z" opacity=".55" /><path d="M1 15h3v2H1zM6 15h11v2H6z" /></g>,
  <g stroke="none"><path d="M18 0L7 7l-2 5 10-4zM0 17l4-5 3 2zM9 12c3-1 6-2 9-5l-4 7-2-2z" /></g>,
  <g stroke="none"><path d="M5 0c-3 5-3 11 0 17-6-3-7-13 0-17zM8 9h10c0 5-2 8-5 8s-5-3-5-8zM10 5h6v3h-6z" /></g>,
  <g><path d="M0 1h18v13H0z" stroke="none" /><path d="M3 12c4-1 3-4 7-5l6-6" stroke="#454545" strokeWidth="2.500" fill="none" /><path d="M0 14h3v4H0zM15 14h3v4h-3z" stroke="none" /></g>,
  <g stroke="none"><circle cx="9" cy="5" r="3" /><path d="M8 7h2l1 4h5v3H2v-3h5zM2 15h14v2H2z" /></g>,
  <g><path d="M5 14L12 4" strokeWidth="6" strokeLinecap="round" /><path d="M2 8l4-3M12 14l4-3" strokeWidth="3" opacity=".5" /><path d="M7 8l3 2M9 6l3 2M5 11l3 2" stroke="#454545" strokeWidth="1" strokeDasharray="1 1" /></g>,
  <g stroke="none"><circle cx="6" cy="3" r="2.500" /><path d="M5 5h2l1 3h4v3H0V8h4z" /><path d="M8 13l4-5 2-1 4 10H6z" /></g>,
  <path d="M9 1c3 5 6 7 6 11a6 6 0 0 1-12 0c0-4 3-6 6-11z" stroke="none" />,
  <path d="M4 2c4-3 13-1 13 5 0 4-5 7-8 5l-6 5-2-2 6-5c-2-1-2-3 0-4-3 1-4-2-3-4z" stroke="none" />,
  <g><circle cx="8" cy="12" r="5.500" stroke="none" /><path d="M10 8l4-7" strokeWidth="2.500" /></g>,
];

const ToolSvg = ({ children }: { children: ReactNode }) => (
  <svg width="18" height="18" viewBox="0 0 18 18" fill={INK} stroke={INK}>{children}</svg>
);

const Act = ({ d, s, size = 16, color = INK, extra }: { d?: string; s?: string; size?: number; color?: string; extra?: ReactNode }) => (
  <svg width={size} height={size} viewBox="0 0 16 16" fill="none" stroke={color} strokeWidth="1.500">
    {d && <path d={d} fill={color} stroke="none" />}
    {s && <path d={s} />}
    {extra}
  </svg>
);

const DELETE = <Act d="M0 0h16v16H0z" extra={<path d="M4 4l8 8M12 4l-8 8" stroke="#3c3c3c" strokeWidth="3" />} />;
const RESET = <Act s="M4 7a5 5 0 1 1 6 7" d="M0 6h8L4 11zM4 12h4v4H4z" />;
const NEWDOC = <Act s="M7 3h5l3 3v9H5V9" d="M2 0h2v3h3v2H4v3H2V5H0V3h2z" />;
const COPY = <Act s="M1 2h9v8H1zM12 6h3v8H6v-2" />;
const MOVE = <Act s="M8 2v12M2 8h12" d="M8 0l3 4H5zM8 16l3-4H5zM0 8l4-3v6zM16 8l-4-3v6z" />;
const BRUSH = <Act d="M16 0L8 11 6 9zM5 10l2 2c0 3-3 4-7 4 3-1 3-5 5-6z" />;

/* Miniature previews of the open pictures. */
const Thumb = ({ kind, w = 48, h = 25 }: { kind: 'card' | 'blue' | 'terms'; w?: number; h?: number }) => (
  <svg width={w} height={h} viewBox="0 0 48 25" preserveAspectRatio="none">
    <path d="M0 0h48v25H0z" fill={kind === 'blue' ? BLUE : '#fff'} />
    {kind === 'card' && (
      <g>
        <path d="M26 0h22v13l-4 4-5-2-2-7-8-3z" fill="#a3d9f1" /><path d="M30 0h8v6zM42 5l6 3v6z" fill="#cdeaf7" />
        <path d="M9 22l3-5 6 2-3 6h-5z" fill="#8fd0ee" /><path d="M13 4h24v20H13z" fill="#f1f1f1" />
        <path d="M21 7h8" stroke="#6fb0da" strokeWidth="2.500" strokeDasharray="2 .5" /><path d="M15 12h18M16 15h14" stroke="#d0d0d0" /><path d="M20 18h8v3h-8z" fill="#1693d2" />
      </g>
    )}
    {kind === 'blue' && (
      <g><path d="M12 0h23v25H12z" fill="#fff" /><path d="M21 5h6" stroke="#4f9fd0" strokeWidth="2" /><path d="M20 10h8M19 13h10M18 16h12M20 20h8" stroke="#d5d5e0" /></g>
    )}
    {kind === 'terms' && (
      <g>
        <path d="M0 0h20v5H0z" fill={BLUE} /><path d="M5 2.500h8" stroke="#bfe6f7" /><path d="M20 0h10v5H20z" fill="#bfe6f6" /><path d="M36 2.500h7" stroke="#4f9fd0" strokeWidth="2" strokeDasharray="2 .5" />
        <path d="M5 7.500h6M5 10.500h38M5 12.500h36M5 15.500h38M5 18.500h36M20 22.500h9" stroke="#dcdcdc" />
      </g>
    )}
  </svg>
);

/* Deterministic scatter for the splatter brushes: power 0.5 fills a disc evenly, 1 crowds the middle. */
const scatter = (seed: number, n: number, spread: number, size: number, power: number) => {
  let v = seed * 104729 + 12345;
  const next = () => {
    v = (v + 0x6d2b79f5) | 0;
    let t = Math.imul(v ^ (v >>> 15), 1 | v);
    t = (t + Math.imul(t ^ (t >>> 7), 61 | t)) ^ t;
    return ((t ^ (t >>> 14)) >>> 0) / 4294967296;
  };
  let d = '';
  for (let i = 0; i < n; i++) {
    const a = next() * 6.283;
    const r = spread * Math.pow(next(), power);
    const s = (size * (0.6 + next() * 0.8)).toFixed(1);
    d += `M${(17 + Math.cos(a) * r).toFixed(1)} ${(17 + Math.sin(a) * r).toFixed(1)}h${s}v${s}h-${s}z`;
  }
  return d;
};

type BrushDef = { art?: ReactNode; mark?: 'blue' | 'red' | 'plain' | 'tri' | 'tri2'; on?: boolean };
const splat = (seed: number, n: number, spread: number, size: number, power = 0.5, opacity = 1) => (
  <path d={scatter(seed, n, spread, size, power)} opacity={opacity} />
);

const BRUSHES: BrushDef[] = [
  {}, {}, { art: <path d="M16 16h2v2h-2z" />, mark: 'tri' },
  { art: <path d="M3 13h29v7H3z" />, mark: 'blue' }, { art: <ellipse cx="17" cy="17" rx="14" ry="6" fill="url(#soft2)" />, mark: 'blue' },
  { art: <path d="M3 16h29v1H3z" />, mark: 'blue' }, { art: <circle cx="17" cy="17" r="11" fill="url(#soft0)" />, mark: 'blue' },
  { art: <circle cx="17" cy="17" r="12" fill="url(#soft1)" />, mark: 'blue', on: true },
  { art: <circle cx="17" cy="17" r="13" fill="url(#soft2)" />, mark: 'blue' }, { art: <circle cx="17" cy="17" r="15.500" />, mark: 'blue' },
  { art: <path d="M17 2l3.500 11H31l-8.500 6.500L26 30l-9-6.500L8 30l3.500-10.500L3 13h10.500z" />, mark: 'blue' },
  { art: <g><circle cx="17" cy="17" r="6" opacity=".5" />{splat(3, 300, 11, 0.8, 0.8)}</g>, mark: 'red' },
  { art: <g transform="translate(0 5) scale(1 .7)">{splat(5, 130, 12, 0.9, 0.7)}</g>, mark: 'red' },
  { art: <g transform="translate(5 0) scale(.7 1)">{splat(8, 130, 13, 1, 0.7)}</g>, mark: 'red' },
  { art: <g><circle cx="17" cy="17" r="11" fill="url(#soft0)" opacity=".6" />{splat(11, 200, 11, 0.8, 0.8, 0.4)}</g>, mark: 'red' },
  { art: <g><circle cx="17" cy="17" r="6" opacity=".5" />{splat(14, 380, 15, 0.8, 0.8)}</g>, mark: 'red' },
  { art: <path d="M7 4l4 7" stroke="#777" strokeWidth="1.500" />, mark: 'tri2' },
  { art: splat(17, 9, 14, 1.6), mark: 'plain' }, { art: splat(21, 24, 15, 2), mark: 'plain' }, { art: splat(23, 18, 16, 0.8) },
  { art: splat(26, 190, 14, 0.9, 0.6), mark: 'plain' }, { art: splat(29, 330, 15, 0.8), mark: 'plain' },
  { art: splat(31, 260, 15, 0.8, 0.6), mark: 'red' }, { art: splat(34, 340, 15, 0.9), mark: 'red' },
  { art: <g><circle cx="17" cy="17" r="13.500" fill="#777" />{splat(36, 240, 13, 1.1)}</g>, mark: 'red' },
  { art: <path d="M4 13c8-3 18-3 27 0v3H4z" fill="#555" /> }, { art: <path d="M5 13c7-3 16-3 23 0v4H5z" fill="#aaa" /> }, { art: splat(40, 12, 12, 1) },
  { art: <path d="M6 5l4 8M13 15l3-5M20 14l5-5" stroke="#888" strokeWidth="1.500" /> }, { art: splat(45, 30, 12, 1.2) },
];

const Brush = ({ def }: { def: BrushDef }) => (
  <BrushCell $on={def.on} aria-label="Brush">
    <svg width="34" height="34" viewBox="0 0 34 34">
      {def.art}
      {def.mark === 'tri' && <path d="M33 28v5h-5z" fill="#7f9cf0" />}
      {def.mark === 'tri2' && <path d="M33 28v5h-5z" fill="#f08a8a" />}
      {(def.mark === 'blue' || def.mark === 'red') && <path d="M29 28h5v5h-5z" fill={def.mark === 'blue' ? '#8fa6f3' : '#f39a9a'} />}
      {def.mark && !def.mark.startsWith('tri') && <path d="M29 31h5M31.500 28.500v5" stroke="#000" />}
    </svg>
  </BrushCell>
);

const SoftDefs = () => (
  <svg width="0" height="0">
    <defs>
      {[[0.1, 0.4], [0.25, 0.6], [0.5, 0.85]].map(([a, b], i) => (
        <radialGradient key={i} id={`soft${i}`}>
          <stop offset={a} stopColor="#000" /><stop offset={b} stopColor="#000" stopOpacity=".4" /><stop offset="1" stopColor="#000" stopOpacity="0" />
        </radialGradient>
      ))}
    </defs>
  </svg>
);

/* ------------------------------------------------------------- rulers */

const STEP = 50 / 3;
const ticks = (from: number, to: number) => Array.from({ length: to - from + 1 }, (_, i) => from + i);

const TopRuler = () => (
  <svg width="928" height="18" viewBox="0 0 928 18" fill="#d6d6d6" fontSize="10">
    <path d="M0 16h928v1H0zM10 12h9l-4.500 4z" />
    {ticks(-2, 53).map(i => {
      const x = Math.round(38 + i * STEP);
      const major = i % 10 === 0;
      const h = major ? 12 : i % 2 ? 4 : 6;
      return (
        <g key={i}>
          <path d={`M${x} ${16 - h}h1v${h}h-1z`} />
          {major && <text x={x + 2} y="12">{i * 25}</text>}
        </g>
      );
    })}
  </svg>
);

const LeftRuler = () => (
  <svg width="18" height="606" viewBox="0 0 18 606" fill="#d6d6d6" fontSize="10">
    <path d="M17 2h1v604h-1zM12 459l5 4.500-5 4.500z" />
    {ticks(-6, 29).map(i => {
      const y = Math.round(114 + i * STEP);
      const major = i % 10 === 0;
      const w = major ? 12 : i % 2 ? 3 : 5;
      return (
        <g key={i}>
          <path d={`M${17 - w} ${y}h${w}v1h-${w}z`} />
          {major && String(i * 25).split('').map((c, k) => <text key={k} x="5" y={y + 9 + k * 9}>{c}</text>)}
        </g>
      );
    })}
  </svg>
);

/* -------------------------------------------------------------- views */

const PageHeader = ({ small }: { small?: boolean }) => (
  <Hero $small={small}>
    <Banner>
      <Greeting $small={small}>Hola, Manoel!</Greeting>
      <Facets small={small} />
    </Banner>
    <LogoCell $small={small}><BseLogo small={small} /></LogoCell>
  </Hero>
);

const TABS: { name: string; icon: ReactNode; active?: boolean; line?: boolean }[] = [
  { name: 'Deser', icon: <Udemy />, line: true },
  { name: 'phpM', icon: <SiPhpmyadmin size={16} color="#f29111" />, line: true },
  { name: 'Login', icon: <svg width="16" height="16"><circle cx="8" cy="8" r="7" fill="#4a4946" /></svg>, line: true },
  { name: 'CRUD', icon: <FaGithub size={16} color="#1b1b1b" />, line: true },
  { name: 'Deser', icon: <Udemy />, line: true },
  { name: 'Redef', icon: <FaYoutube size={16} color="#ff0000" />, line: true },
  { name: 'Spacir', icon: <Bootstrap />, line: true },
  { name: 'Sizing', icon: <Bootstrap />, line: true },
  { name: 'GIMP', icon: <WilberFace /> },
  { name: 'BSE', icon: <BseIcon />, active: true },
  { name: 'qual p', icon: <FaUbuntu size={16} color="#e95420" />, line: true },
];

const BrowserWindow = () => (
  <Browser>
    <TabStrip>
      {TABS.map((t, i) => (
        <Tab key={i} $active={t.active} $line={t.line}>
          {t.icon}
          <TabName href="#" $active={t.active}>{t.name}</TabName>
          <TabClose aria-label="Close tab"><Cross /></TabClose>
        </Tab>
      ))}
      <NewTab aria-label="New tab">
        <svg width="13" height="13" viewBox="0 0 13 13" stroke="#e6e3db" strokeWidth="2"><path d="M6.500 0v13M0 6.500h13" /></svg>
      </NewTab>
      <WinButtons>
        <WinButton aria-label="Minimize"><svg width="8" height="8" stroke="currentColor"><path d="M0 4.500h8" /></svg></WinButton>
        <WinButton aria-label="Maximize"><svg width="8" height="8" stroke="currentColor" fill="none"><path d="M.5 1.500h7v6h-7z" /></svg></WinButton>
        <WinButton $close aria-label="Close"><Cross w={1.2} /></WinButton>
      </WinButtons>
    </TabStrip>
    <NavBar>
      <IconButton aria-label="Back"><Act size={18} color="#45484b" s="M15 8H2M8 2L2 8l6 6" /></IconButton>
      <IconButton aria-label="Forward"><Act size={18} color="#a9aaab" s="M1 8h13M8 2l6 6-6 6" /></IconButton>
      <IconButton aria-label="Reload"><Act size={18} color="#45484b" s="M13.500 10A6 6 0 1 1 12 3.500l2 2" d="M15 1v6H9z" /></IconButton>
      <UrlBox>
        <svg width="12" height="14" viewBox="0 0 12 14"><path d="M1 5h10v8H1z" fill="#5f6368" /><path d="M3 6V4a3 3 0 0 1 6 0v2" fill="none" stroke="#5f6368" strokeWidth="1.500" /></svg>
        <Url>https://<b>bsedev-agility.samplemed.com.br</b>/UserQuestionnaire?token=4de6a6554cf01877f851115197cccea197ed47fe9cea31325811c6673c34cf7...</Url>
        <IconButton aria-label="Translate"><Act color="#5f6368" d="M1 1h7l2 10H1z" s="M10 4h5v11H8M10 8h4M12 7c0 3-1 4-2 5" extra={<path d="M7 5a2 2 0 1 0 0 2H5" stroke="#fff" strokeWidth="1" />} /></IconButton>
        <IconButton aria-label="Zoom"><Act color="#5f6368" s="M6.500 1.500a5 5 0 1 0 .1 0M10 10l5 5M4 6.500h5" /></IconButton>
        <IconButton aria-label="Bookmark"><Act color="#5f6368" s="M8 2l1.800 4.200 4.400.4-3.300 3 1 4.400L8 11.700 4.100 14l1-4.400-3.300-3 4.400-.4z" /></IconButton>
      </UrlBox>
      <svg width="16" height="18" viewBox="0 0 16 18"><path d="M0 1h16v16H0z" fill="#ddd" stroke="#aaa" /><path d="M0 1h16v4H0z" fill="#a58cb4" /><path d="M2 8v6M2 8h2v3H2M7 8v6M10 8v6M7 11h3M13 8v6M13 8h2v3h-2" stroke="#b5a5a5" fill="none" /></svg>
      <Divider />
      <svg width="20" height="20" viewBox="0 0 20 20"><circle cx="10" cy="10" r="10" fill="#d9d8d6" /><circle cx="10" cy="6.500" r="3" fill="#8f9194" /><ellipse cx="10" cy="13.500" rx="6" ry="3" fill="#8f9194" /></svg>
      <IconButton aria-label="Menu"><svg width="4" height="14" fill="#55585c"><circle cx="2" cy="2" r="1.700" /><circle cx="2" cy="7" r="1.700" /><circle cx="2" cy="12" r="1.700" /></svg></IconButton>
    </NavBar>
    <PageHeader />
    <Question>
      <QuestionNumber>1</QuestionNumber>
      <Field>
        <label htmlFor="peso">Qual é o seu peso?</label>
        <input id="peso" defaultValue="58.00" />
      </Field>
    </Question>
    <Footer>
      <StepButton>‹ Volver</StepButton>
      <Progress type="range" min={0} max={100} defaultValue={0} aria-label="Progreso" />
      <StepButton $primary>Siguiente ›</StepButton>
    </Footer>
  </Browser>
);

const LAUNCH: { name: string; icon: ReactNode; running?: boolean; active?: boolean; badge?: string }[] = [
  { name: 'Firefox', icon: <Firefox /> },
  { name: 'Thunderbird', icon: <Thunderbird />, running: true, badge: '103' },
  { name: 'Files', icon: <Files />, running: true },
  { name: 'Writer', icon: <OfficeDoc main="#0b5f92" corner="#0f79b8" kind="writer" /> },
  { name: 'Software', icon: <Software />, running: true },
  { name: 'Help', icon: <Help /> },
  { name: 'Code', icon: <VsCode />, running: true },
  { name: 'Chrome', icon: <ChromeLogo size={47} />, running: true, active: true },
  { name: 'Terminal', icon: <Terminal />, running: true },
  { name: 'GIMP', icon: <Wilber size={46} />, running: true },
  { name: 'Impress', icon: <OfficeDoc main="#8b3208" corner="#a33e03" kind="impress" />, running: true },
  { name: 'Applications', icon: <AppsGrid /> },
];

const UbuntuDesktop = () => (
  <Desktop>
    <TopBar>
      <TopLeft>
        <Activities>Activities</Activities>
        <ChromeLogo size={16} />
        <span>Google Chrome</span>
        <svg width="10" height="6" fill="#dfdbd2"><path d="M0 0h10L5 6z" /></svg>
      </TopLeft>
      <time>ter 15:33</time>
      <TopRight>
        <svg width="16" height="16" viewBox="0 0 16 16" fill="#dfdbd2"><path d="M5 0h6v5H5zM0 11h6v5H0zM10 11h6v5h-6zM7.500 5h1v3h-1zM3 8h10v3h-1V9H4v2H3z" /></svg>
        <svg width="16" height="16" viewBox="0 0 16 16" fill="none" stroke="#dfdbd2" strokeWidth="1.500"><path d="M0 5h3l4-4v14l-4-4H0z" fill="#dfdbd2" stroke="none" /><path d="M9 5c1 2 1 4 0 6M11 3c2 3 2 7 0 10M13 1c3 4 3 10 0 14" /></svg>
        <svg width="16" height="16" viewBox="0 0 16 16" fill="none" stroke="#dfdbd2" strokeWidth="1.700"><path d="M5 2.500a6 6 0 1 0 6 0M8 0v8" /></svg>
        <svg width="10" height="5" fill="#dfdbd2"><path d="M0 0h10L5 5z" /></svg>
      </TopRight>
    </TopBar>
    <DesktopBody>
      <Launcher>
        {LAUNCH.map(l => (
          <LaunchItem key={l.name} aria-label={l.name} $running={l.running} $active={l.active}>
            {l.icon}
            {l.badge && <Badge>{l.badge}</Badge>}
          </LaunchItem>
        ))}
      </Launcher>
      <BrowserWindow />
    </DesktopBody>
  </Desktop>
);

const UnitCombo = ({ label, w = 51 }: { label: string; w?: number }) => (
  <Combo $w={w}><select aria-label={label} defaultValue="px"><option>px</option></select><Chevron /></Combo>
);

const SpinPair = ({ a, b, names }: { a: string; b: string; names: [string, string] }) => (
  <Row $h={23} $mt={2} $pl={12} $gap={2}>
    <Entry $h={23}><input aria-label={names[0]} defaultValue={a} /><SpinArrows /></Entry>
    <Entry $h={23}><input aria-label={names[1]} defaultValue={b} /><SpinArrows /></Entry>
  </Row>
);

const ToolDock = () => (
  <Dock $w={187}>
    <svg width="184" height="21" viewBox="0 0 184 21" fill="#535353">
      <path d="M10 21C8 8 16 1 26 1c12 0 17 8 25 20H38c0-9-15-12-19-3v3zM50 0h128l-4 21H50z" />
      <circle cx="71" cy="9" r="19" stroke="#454545" strokeWidth="2" /><circle cx="107" cy="9" r="19" stroke="#454545" strokeWidth="2" />
      <circle cx="70" cy="12" r="7" fill="#454545" /><circle cx="110" cy="13" r="10" fill="#454545" />
    </svg>
    <ToolGrid>
      {TOOLS.map((t, i) => <Tool key={i} $on={i === 13} aria-label="Tool"><ToolSvg>{t}</ToolSvg></Tool>)}
    </ToolGrid>
    <svg width="187" height="47" viewBox="0 0 187 47">
      <path d="M84 17h36v27H84z" fill="#fff" stroke="#000" /><path d="M120.500 16v28.500H83" fill="none" stroke="#000" />
      <path d="M67.500 3.500h36v26h-36z" fill="#000" stroke="#777" />
      <path d="M113 7h8v8" fill="none" stroke={INK} strokeWidth="2" /><path d="M109 7l5-4v8zM121 18l-4-5h8z" fill={INK} />
      <path d="M72 37h6v6h-6z" fill="#fff" stroke="#999" /><path d="M67.500 32.500h6v6h-6z" fill="#000" stroke={INK} />
    </svg>
    <DockTabs $h={24}>
      <DockTab $on $w={24} aria-label="Tool options"><Act s="M1 4h14v10H1zM5 4l3-3 3 3" /></DockTab>
      <DockTab $w={21} aria-label="Device status"><Act d="M9 0L3 10l-3 5 5-3z" extra={<g><circle cx="10" cy="11" r="5" fill={INK} stroke="none" /><path d="M10 10v4M10 7v2" stroke="#202020" strokeWidth="2" /></g>} /></DockTab>
      <DockTab $w={22} aria-label="Undo history"><Act color="#6c6c6c" s="M7 4h6a3 3 0 0 1 0 5" extra={<path d="M2 10h7a3 3 0 0 1 0 5M5 7l-3 3 3 3" stroke={INK} />} /></DockTab>
      <DockTab $w={24} aria-label="Images"><Thumb kind="terms" w={17} h={17} /></DockTab>
      <TabMenu aria-label="Tab menu"><LeftTriangle /></TabMenu>
    </DockTabs>
    <Frame $grow>
      <Options>
        <OptionsTitle>Crop</OptionsTitle>
        <CheckLabel><Check type="checkbox" />Current layer only</CheckLabel>
        <CheckLabel><Check type="checkbox" />Allow growing</CheckLabel>
        <CheckLabel><Check type="checkbox" />Expand from center</CheckLabel>
        <Row $h={29} $mt={2} $pl={3} $gap={5}>
          <Check type="checkbox" aria-label="Fixed" />
          <Combo>
            <span>Fixed</span>
            <RightSelect aria-label="Fixed" defaultValue="Aspect ratio"><option>Aspect ratio</option></RightSelect>
            <Chevron />
          </Combo>
        </Row>
        <Row $h={29} $mt={2} $pl={12} $gap={1}>
          <Entry $h={25} $italic>
            <input aria-label="Ratio" defaultValue="1278:664" />
            <svg width="16" height="12" viewBox="0 0 16 12"><path d="M6 0h10v12H6L0 6z" fill={INK} /><path d="M7 3l6 6M13 3L7 9" stroke="#222" strokeWidth="2" /></svg>
          </Entry>
          <Pressed aria-label="Portrait"><Act color="#a8a8a8" s="M3 1h8l2 2v12H3z" d="M5 12c0-4 6-4 6 0z" extra={<circle cx="8" cy="7" r="1.500" fill="#777" stroke="none" />} /></Pressed>
          <Pressed $on aria-label="Landscape"><Act s="M1 3h14v7l-3 3H1z" d="M3 10l3-4 3 3 3-3 2 2v2z" /></Pressed>
        </Row>
        <Row $h={29} $mt={4}><Grow>Position:</Grow><UnitCombo label="Position unit" /></Row>
        <SpinPair a="71" b="99" names={['Position X', 'Position Y']} />
        <Row $h={29} $mt={4}><Grow>Size:</Grow><UnitCombo label="Size unit" /></Row>
        <SpinPair a="1278" b="664" names={['Width', 'Height']} />
        <CheckLabel $dim><Check type="checkbox" defaultChecked />Highlight</CheckLabel>
        <Row $h={34} $pl={12}>
          <ScaleBox $fill="46%"><span>Highlight opacity</span><input defaultValue="50,0" /><ScaleArrows /></ScaleBox>
        </Row>
        <Row $h={29} $mt={4}>
          <Combo><select aria-label="Guides" defaultValue="No guides"><option>No guides</option></select><Chevron /></Combo>
        </Row>
        <PushButton>Auto Shrink</PushButton>
        <CheckLabel><Check type="checkbox" />Shrink merged</CheckLabel>
      </Options>
      <ActionBar>
        <Act d="M7 0h2v5h3L8 9 4 5h3zM3 10h10v2H3zM3 13h10v3H3z" />
        <Act size={17} s="M3 5a6 6 0 1 1 0 7" d="M1 1v7h7z" />
        {DELETE}
        {RESET}
      </ActionBar>
    </Frame>
  </Dock>
);

const ImageArea = () => (
  <Workspace>
    <ImageTabs>
      <ImageTab aria-label="Image 1"><Thumb kind="card" /></ImageTab>
      <ImageTab aria-label="Image 2"><Thumb kind="card" /></ImageTab>
      <ImageTab aria-label="Image 3"><Thumb kind="blue" h={20} /></ImageTab>
      <ImageTab aria-label="Image 4"><Thumb kind="card" /></ImageTab>
      <ImageTab $on aria-label="Image 5">
        <Thumb kind="terms" />
        <svg width="14" height="14" viewBox="0 0 14 14" fill="none" stroke={INK} strokeWidth="1.500"><path d="M1 1h12v12H1zM4 4l6 6M10 4l-6 6" /></svg>
      </ImageTab>
    </ImageTabs>
    <RulerRow>
      <svg width="21" height="18" viewBox="0 0 21 18"><path d="M4 3h12v12H4z" fill="none" stroke="#9a9a9a" strokeWidth="2" /><path d="M7 5l7 4-7 4z" fill={INK} /></svg>
      <RulerClip><TopRuler /></RulerClip>
      <svg width="24" height="18" viewBox="0 0 24 18"><path d="M5 4h12v12H5z" fill={INK} /><circle cx="11" cy="10" r="4" fill={INK} stroke="#454545" strokeWidth="2" /></svg>
    </RulerRow>
    <CanvasRow>
      <SideRuler><LeftRuler /></SideRuler>
      <Viewport>
        <Marquee>
          <Sheet>
            <PageHeader small />
            <Terms>
              <h2>Términos de Uso</h2>
              <p>
                Para completar el cuestionario de salud, usted ha recibido un mensaje en su teléfono móvil vía SMS donde se le ha facilitado un código. Este código<br />
                es necesario para acceder al cuestionario de salud que usted debe completar como parte de la evaluación para la contratación del seguro que desea<br />
                adquirir. La introducción de este código representa el reconocimiento de la identidad del solicitante, es decir, usted confirma que es usted quien está<br />
                accediendo al cuestionario y quien proporciona la información necesaria para su cumplimentación.
              </p>
              <p>
                Este reconocimiento de su identidad como solicitante del seguro supone la liberación de la responsabilidad de la compañía ante cualquier<br />
                reclamación sobre la suplantación de su personalidad ya que el teléfono al que se le ha enviado el código es de su propiedad y ha sido<br />
                proporcionado por usted.
              </p>
              <p>
                Igualmente se compromete a contestar a las preguntas del cuestionario con la mayor veracidad posible. El cuestionario no será válido si se deja<br />
                alguna pregunta sin contestar, de tal modo que la aplicación no permitirá en envío del mismo.
              </p>
              <p>Tras la finalización del cuestionario, el documento generado dispone de firma electrónica con certificación de día y hora de su cumplimentación.</p>
              <Accept><input type="checkbox" />He leído y acepto los términos de uso</Accept>
            </Terms>
          </Sheet>
        </Marquee>
      </Viewport>
      <VTrack $thumb="95%" />
    </CanvasRow>
    <ScrollRow>
      <svg width="12" height="12" viewBox="0 0 12 12"><path d="M.5 2.500h11v9H.5z" fill="#666" stroke={INK} strokeDasharray="1 1" /></svg>
      <HTrack $thumb="100%" $grow />
      <svg width="20" height="17" viewBox="0 0 20 17"><path d="M8 1l8 15-8-4-8 4z" fill={INK} /></svg>
    </ScrollRow>
    <StatusBar>
      <UnitCombo label="Unit" w={53} />
      <Entry $h={25} $w={37} $tight><input aria-label="Zoom" defaultValue="66,7 %" /></Entry>
      <Combo $w={18} $tight><Chevron size={12} /></Combo>
      <span>Screenshot from 2019-07-02 15-30-15.png (19,3 MB)</span>
    </StatusBar>
  </Workspace>
);

const BrushDock = () => (
  <Dock $w={203}>
    <SoftDefs />
    <DockTabs $h={24}>
      <DockTab $on $w={24} aria-label="Brushes"><svg width="17" height="17" viewBox="0 0 17 17"><path d="M0 0h17v17H0z" fill="#fff" /><circle cx="8" cy="9" r="6" fill="url(#soft1)" /><path d="M12 14h5M14.500 11.500v5" stroke="#22a" /></svg></DockTab>
      <DockTab $w={24} aria-label="Patterns"><svg width="17" height="17" viewBox="0 0 17 17"><path d="M0 0h17v17H0z" fill="#fdbf55" /><path d="M3 0v17M7 0v17M12 0v17" stroke="#f09a35" /><path d="M.5 0v17" stroke="#8a4a10" /></svg></DockTab>
      <DockTab $w={24} aria-label="Fonts"><svg width="17" height="17" viewBox="0 0 17 17"><path d="M0 0h17v17H0z" fill="#fff" /><text x="8.500" y="13" fontSize="11" textAnchor="middle" fill="#111">Aa</text></svg></DockTab>
      <DockTab $w={24} aria-label="History"><svg width="16" height="14" viewBox="0 0 16 14"><path d="M0 0h16v14H0z" fill="#fff" /><path d="M6 2h4v2H6z" fill="#9bd" /><path d="M5 7h6l1 4H4z" fill="#ddd" /></svg></DockTab>
      <TabMenu aria-label="Tab menu"><LeftTriangle /></TabMenu>
    </DockTabs>
    <Frame>
      <Row $h={24} $mt={1}>
        <Entry $h={23}><input aria-label="Filter" placeholder="filter" /><Chevron size={11} /></Entry>
      </Row>
      <BrushCaption>2. Hardness 050 (51 × 51)</BrushCaption>
      <BrushArea>
        <BrushGrid>{BRUSHES.map((b, i) => <Brush key={i} def={b} />)}</BrushGrid>
        <VTrack $thumb="44%" />
      </BrushArea>
      <Row $h={24}>
        <Entry $h={22}><input aria-label="Tags" defaultValue="Basic," /><Chevron size={11} /></Entry>
      </Row>
      <ScaleBox $fill="4%"><span>Spacing</span><input defaultValue="10,0" /><ScaleArrows /></ScaleBox>
      <ActionBar>
        <Act d="M0 2h8v2H0zM0 6h6v2H0zM0 10h5v2H0zM0 14h11v2H0zM14 1l2 2-8 9-3 1 1-3z" />
        {NEWDOC}
        {COPY}
        {DELETE}
        <Act s="M13 11A6 6 0 1 1 13 5" d="M15 1v7H8z" />
        <Act d="M0 10h16v6H0z" s="M2 10V5l3-4h6v3l3 3v3" />
      </ActionBar>
    </Frame>
    <Grip />
    <DockTabs $h={20}>
      <DockTab $on $w={23} aria-label="Layers"><Act d="M4 0h12l-4 4H0zM4 6h12l-4 4H0zM4 12h12l-4 4H0z" /></DockTab>
      <DockTab $w={22} aria-label="Channels"><Act s="M1 1h14v14H1zM5 4v8M8 4v8M11 4v8" /></DockTab>
      <DockTab $w={22} aria-label="Paths"><Act d="M0 2h5v4H0zM6 2h4v4H6zM11 2h5v4h-5z" s="M1 4h14M3 14C4 6 12 6 13 14" /></DockTab>
      <TabMenu aria-label="Tab menu"><LeftTriangle /></TabMenu>
    </DockTabs>
    <Frame $grow>
      <Row $h={29} $mt={2} $gap={2}>
        <Combo><span>Mode</span><RightSelect aria-label="Mode" defaultValue="Normal"><option>Normal</option></RightSelect><Chevron /></Combo>
        <Combo $w={46}>{RESET}<Grow /><Chevron /></Combo>
      </Row>
      <Row $h={34} $mt={1}>
        <ScaleBox $fill="94%"><span>Opacity</span><input defaultValue="100,0" /><ScaleArrows top="#777" /></ScaleBox>
      </Row>
      <Row $h={27} $gap={10}>
        <span>Lock:</span>
        {BRUSH}
        {MOVE}
        <Act d="M0 0h4v4H0zM8 0h4v4H8zM4 4h4v4H4zM12 4h4v4h-4zM0 8h4v4H0zM8 8h4v4H8zM4 12h4v4H4zM12 12h4v4h-4z" />
      </Row>
      <LayerList>
        <LayerRow>
          <svg width="20" height="14" viewBox="0 0 20 14" fill="none" stroke={INK} strokeWidth="2"><path d="M1 7c4-7 14-7 18 0-4 7-14 7-18 0z" /><circle cx="10" cy="7" r="3" /></svg>
          <LayerThumb><Thumb kind="terms" w={36} h={21} /></LayerThumb>
          <span>Screenshot from</span>
        </LayerRow>
      </LayerList>
      <HTrack $thumb="54%" />
      <ActionBar>
        {NEWDOC}
        <Act d="M0 1h5l2 2h9v2H2v11H0z" s="M4 6h11v9H4zM9.500 7.500v6M6.500 10.500h6" />
        <Act s="M1 11l7-6 7 6" />
        <Act s="M1 5l7 6 7-6" />
        {COPY}
        <Act s="M8 4v11M4 7h8M1 10c1 3 3 5 7 5s6-2 7-5M8 1a1.500 1.500 0 1 0 .1 0" />
        <Act d="M3 0h9v6l-4 3-5-3zM1 11l5-1 10-1-3 6H1z" />
        {DELETE}
      </ActionBar>
    </Frame>
  </Dock>
);

const MENUS = ['File', 'Edit', 'Select', 'View', 'Image', 'Layer', 'Colors', 'Tools', 'Filters', 'Windows', 'Help'];

const GimpWindow = () => (
  <Gimp>
    <TitleBar>
      <span>*[print5] (exported)-13.0 (RGB color 8-bit gamma integer, GIMP built-in sRGB, 1 layer) 1278x664 – GIMP</span>
      <WinButtons>
        <WinButton $dim aria-label="Minimize"><svg width="8" height="8" stroke="currentColor"><path d="M0 4.500h8" /></svg></WinButton>
        <WinButton $dim aria-label="Maximize"><svg width="8" height="8" stroke="currentColor" fill="none"><path d="M.5 1.500h7v6h-7z" /></svg></WinButton>
        <WinButton $dim aria-label="Close"><Cross w={1.2} /></WinButton>
      </WinButtons>
    </TitleBar>
    <MenuBar>{MENUS.map(m => <button key={m}>{m}</button>)}</MenuBar>
    <GimpBody>
      <ToolDock />
      <Sash />
      <ImageArea />
      <BrushDock />
    </GimpBody>
  </Gimp>
);

export default function App() {
  return (
    <>
      <Global />
      <Screen>
        <UbuntuDesktop />
        <GimpWindow />
      </Screen>
    </>
  );
}
